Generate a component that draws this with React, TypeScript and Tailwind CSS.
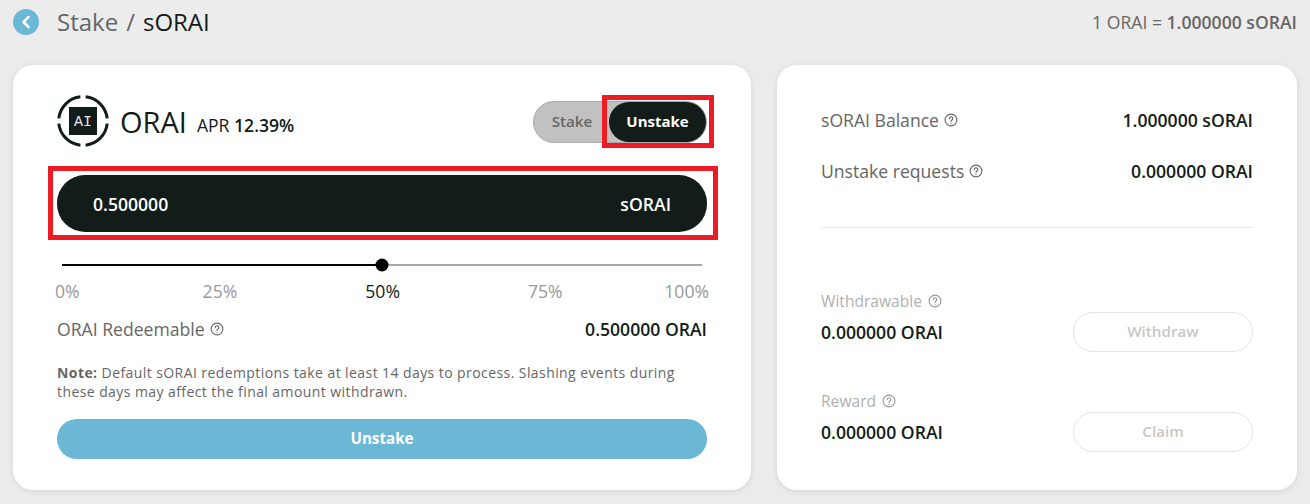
import { ChevronLeft } from "lucide-react";

const font = { fontFamily: '"Open Sans", sans-serif' };

const Help = ({ className = "" }: { className?: string }) => (
  <svg viewBox="0 0 14 14" className={`h-[14px] w-[14px] shrink-0 ${className}`} fill="none" stroke="currentColor">
    <circle cx="7" cy="7" r="5.9" strokeWidth="1.1" />
    <path d="M5.3 5.6a1.75 1.75 0 1 1 2.7 1.45c-.65.43-1 .75-1 1.45" strokeWidth="1.1" strokeLinecap="round" />
    <circle cx="7" cy="10.3" r=".65" fill="currentColor" stroke="none" />
  </svg>
);

const Logo = () => (
  <svg viewBox="0 0 54 54" className="h-[54px] w-[54px] shrink-0" fill="none">
    <g stroke="#121c19" strokeWidth="3">
      <path d="M23.4 1.8A24.5 24.5 0 0 0 1.8 23.4" />
      <path d="M28.6 1.8A24.5 24.5 0 0 1 50.2 23.4" />
      <path d="M1.8 28.6A24.5 24.5 0 0 0 23.4 50.2" />
      <path d="M50.2 28.6A24.5 24.5 0 0 1 28.6 50.2" />
    </g>
    <rect x="12" y="12" width="28" height="28" fill="#121c19" />
    <text x="26" y="31" textAnchor="middle" fontFamily='"Liberation Mono", monospace' fontSize="15" fill="#e8e8e8">
      AI
    </text>
  </svg>
);

const InfoRow = ({ label, value }: { label: string; value: string }) => (
  <div className="flex h-6 items-center justify-between">
    <div className="flex items-center gap-[5px] text-[17.6px] text-[#666]">
      {label}
      <Help className="text-[#666]" />
    </div>
    <span className="text-[17.6px] font-semibold text-[#121c19]">{value}</span>
  </div>
);

const ActionRow = ({ label, action }: { label: string; action: string }) => (
  <div className="flex items-start justify-between">
    <div>
      <div className="flex items-center gap-[6px] text-[15.6px] leading-[20px] text-[#b0b0b0]">
        {label}
        <Help className="text-[#999]" />
      </div>
      <div className="mt-[9px] text-[17.6px] leading-[24px] font-semibold text-[#121c19]">0.000000 ORAI</div>
    </div>
    <button className="mt-[21px] h-10 w-[180px] rounded-[20px] border border-[#e4e4e4] pb-[2px] text-[15.2px] font-semibold text-[#c8c8c8]">
      {action}
    </button>
  </div>
);

export default function App() {
  return (
    <div className="min-h-[504px] bg-[#ececec] px-[13px]" style={font}>
      <header className="flex h-[44px] items-center justify-between">
        <div className="flex items-center gap-[18px]">
          <span className="flex h-[26px] w-[26px] items-center justify-center rounded-full bg-[#6bb7d6]">
            <ChevronLeft className="h-[20px] w-[20px] text-white" strokeWidth={3} />
          </span>
          <h1 className="flex gap-[8px] text-[24px] font-normal text-[#666]">
            Stake <span>/</span> <span className="font-medium text-[#121c19]">sORAI</span>
          </h1>
        </div>
        <p className="text-[17.6px] text-[#666]">
          1 ORAI = <span className="font-semibold">1.000000 sORAI</span>
        </p>
      </header>

      <main className="mt-[21px] flex gap-[26px]">
        <section className="h-[425px] w-[738px] rounded-[20px] bg-white px-[44px] pt-[30px] shadow-[0_1px_6px_rgba(0,0,0,0.1)]">
          <div className="flex h-[54px] items-center justify-between">
            <div className="flex items-center">
              <Logo />
              <span className="ml-[9px] text-[29px] text-[#121c19]">ORAI</span>
              <span className="mt-[6px] ml-[10px] text-[17.6px] text-[#121c19]">
                APR <span className="font-semibold">12.39%</span>
              </span>
            </div>
            <div className="flex h-[42px] w-[174px] items-center rounded-[21px] border border-[#aaa] bg-[#c1c1c1]">
              <span className="ml-[1px] flex-1 pb-[2px] text-center text-[15.2px] font-semibold text-[#666]">Stake</span>
              <div className="relative flex h-[40px] w-[97px] items-center justify-center rounded-[20px] bg-[#121c19] pb-[2px] text-[15px] font-bold text-white">
                Unstake
                <div className="absolute -top-[7px] -right-[8px] -bottom-[6px] -left-[7px] border-[5px] border-[#ed1c24]" />
              </div>
            </div>
          </div>

          <div className="relative mt-[26px] flex h-[57px] items-center justify-between rounded-[28px] bg-[#121c19] px-[36px] pt-[1px] text-[17.6px] font-semibold text-white">
            <span>0.500000</span>
            <span>sORAI</span>
            <div className="absolute -top-[9px] -right-[11px] -bottom-[8px] -left-[9px] border-[5px] border-[#ed1c24]" />
          </div>

          <div className="relative mx-[5px] mt-[32px] flex h-[2px] bg-[#a8a8a8]">
            <div className="h-full w-1/2 bg-black" />
            <div className="absolute top-1/2 left-1/2 h-[13px] w-[13px] -translate-x-1/2 -translate-y-1/2 rounded-full bg-black" />
          </div>
          <div className="mt-[13px] -mr-[2px] -ml-[2px] flex text-[17.6px] leading-[24px] text-[#999]">
            <span>0%</span>
            <span className="ml-[123px]">25%</span>
            <span className="ml-[128px] font-medium text-[#121c19]">50%</span>
            <span className="ml-[128px]">75%</span>
            <span className="ml-auto">100%</span>
          </div>

          <div className="mt-[14px] flex h-6 items-center justify-between">
            <div className="flex items-center gap-[5px] text-[17.6px] text-[#666]">
              ORAI Redeemable
              <Help className="text-[#666]" />
            </div>
            <span className="text-[17.6px] font-semibold text-[#121c19]">0.500000 ORAI</span>
          </div>

          <p className="mt-[22px] text-[14px] leading-[19px] tracking-[0.42px] text-[#666]">
            <b className="font-bold">Note:</b> Default sORAI redemptions take at least 14 days to process. Slashing
            events during these days may affect the final amount withdrawn.
          </p>

          <button className="mt-[18px] h-10 w-full rounded-[20px] bg-[#6bb7d6] pb-[2px] text-[15.2px] font-bold text-white">
            Unstake
          </button>
        </section>

        <section className="flex h-[425px] w-[520px] flex-col rounded-[20px] bg-white px-[44px] pt-[43px] shadow-[0_1px_6px_rgba(0,0,0,0.1)]">
          <div className="flex flex-col gap-[27px]">
            <InfoRow label="sORAI Balance" value="1.000000 sORAI" />
            <InfoRow label="Unstake requests" value="0.000000 ORAI" />
          </div>
          <div className="mt-[44px] h-px bg-[#e8e8e8]" />
          <div className="mt-[63px] flex flex-col gap-[39px]">
            <ActionRow label="Withdrawable" action="Withdraw" />
            <ActionRow label="Reward" action="Claim" />
          </div>
        </section>
      </main>
    </div>
  );
}
